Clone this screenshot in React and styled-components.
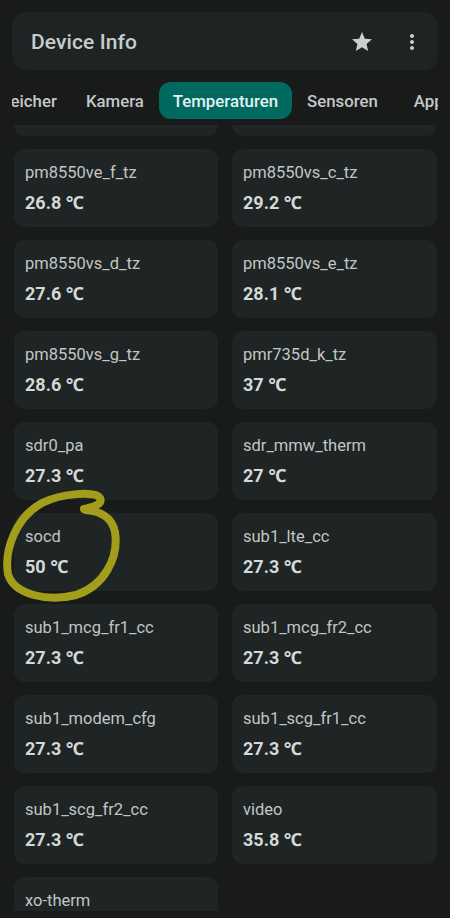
import React from "react";
import styled, { createGlobalStyle } from "styled-components";

const Global = createGlobalStyle`
  html, body { margin: 0; padding: 0; background: #191a1a; }
  body { font-family: Roboto, "Noto Sans", sans-serif; -webkit-font-smoothing: antialiased; }
  * { box-sizing: border-box; }
`;

const Page = styled.div`
  position: relative;
  width: 450px;
  height: 918px;
  overflow: hidden;
  background: #191a1a;
  padding-top: 12px;
`;

const TopBar = styled.header`
  margin: 0 12px;
  height: 58px;
  border-radius: 14px;
  background: #1f2323;
  display: flex;
  align-items: center;
  padding: 2px 6px 0 19px;
`;

const Title = styled.h1`
  flex: 1;
  margin: 0;
  font-size: 21px;
  font-weight: 500;
  color: #c6cdcb;
  letter-spacing: 0.1px;
`;

const IconButton = styled.button`
  width: 40px;
  height: 40px;
  border: 0;
  background: transparent;
  padding: 0;
  display: flex;
  align-items: center;
  justify-content: center;
  margin-left: ${(p) => p.$gap || 0}px;
`;

const TabStrip = styled.nav`
  margin: 12px 12px 0;
  height: 37px;
  overflow: hidden;
  white-space: nowrap;
`;

const TabRow = styled.div`
  display: flex;
  gap: 1px;
  margin-left: -35px;
  height: 100%;
`;

const Tab = styled.div`
  flex: none;
  height: 37px;
  padding: 0 14px;
  display: flex;
  align-items: center;
  border-radius: 12px;
  font-size: 16.8px;
  font-weight: 500;
  margin-left: ${(p) => p.$ml || 0}px;
  color: ${(p) => (p.$active ? "#e3f1ef" : "#c3c9c7")};
  background: ${(p) => (p.$active ? "#006a60" : "transparent")};
`;

const Scroller = styled.main`
  margin-top: 6px;
  height: 786px;
  overflow: hidden;
`;

const Grid = styled.div`
  display: grid;
  grid-template-columns: 204px 205px;
  column-gap: 14px;
  row-gap: 13px;
  padding: 0 13px 0 14px;
  margin-top: -67px;
`;

const Card = styled.div`
  height: 78px;
  border-radius: 11px;
  background: #1f2424;
  padding: 13px 11px 0 11px;
`;

const Label = styled.div`
  font-size: 16.5px;
  color: #c1c7c5;
  line-height: 21px;
`;

const Value = styled.div`
  margin-top: 9px;
  font-size: 18px;
  font-weight: 700;
  color: #d3d9d7;
  line-height: 21px;
`;

const Annotation = styled.svg`
  position: absolute;
  left: 0;
  top: 485px;
  width: 130px;
  height: 125px;
  pointer-events: none;
`;

const sensors = [
  ["pm8550ve_d_tz", "27.1 ℃"],
  ["pm8550vs_b_tz", "28.4 ℃"],
  ["pm8550ve_f_tz", "26.8 ℃"],
  ["pm8550vs_c_tz", "29.2 ℃"],
  ["pm8550vs_d_tz", "27.6 ℃"],
  ["pm8550vs_e_tz", "28.1 ℃"],
  ["pm8550vs_g_tz", "28.6 ℃"],
  ["pmr735d_k_tz", "37 ℃"],
  ["sdr0_pa", "27.3 ℃"],
  ["sdr_mmw_therm", "27 ℃"],
  ["socd", "50 ℃"],
  ["sub1_lte_cc", "27.3 ℃"],
  ["sub1_mcg_fr1_cc", "27.3 ℃"],
  ["sub1_mcg_fr2_cc", "27.3 ℃"],
  ["sub1_modem_cfg", "27.3 ℃"],
  ["sub1_scg_fr1_cc", "27.3 ℃"],
  ["sub1_scg_fr2_cc", "27.3 ℃"],
  ["video", "35.8 ℃"],
  ["xo-therm", "33.4 ℃"],
];

const tabs = [
  { t: "Speicher" },
  { t: "Kamera" },
  { t: "Temperaturen", active: true },
  { t: "Sensoren" },
  { t: "Apps", ml: 7 },
];

export default function App() {
  return (
    <>
      <Global />
      <Page>
        <TopBar>
          <Title>Device Info</Title>
          <IconButton aria-label="favorite">
            <svg width="24" height="24" viewBox="0 0 24 24">
              <path
                fill="#c9d1cf"
                d="M12 17.27L18.18 21l-1.64-7.03L22 9.24l-7.19-.61L12 2 9.19 8.63 2 9.24l5.46 4.73L5.82 21z"
              />
            </svg>
          </IconButton>
          <IconButton aria-label="more" $gap={10}>
            <svg width="24" height="24" viewBox="0 0 24 24">
              <path
                fill="#c9d1cf"
                d="M12 8c1.1 0 2-.9 2-2s-.9-2-2-2-2 .9-2 2 .9 2 2 2zm0 2c-1.1 0-2 .9-2 2s.9 2 2 2 2-.9 2-2-.9-2-2-2zm0 6c-1.1 0-2 .9-2 2s.9 2 2 2 2-.9 2-2-.9-2-2-2z"
              />
            </svg>
          </IconButton>
        </TopBar>
        <TabStrip>
          <TabRow>
            {tabs.map((x) => (
              <Tab key={x.t} $active={x.active} $ml={x.ml}>
                {x.t}
              </Tab>
            ))}
          </TabRow>
        </TabStrip>
        <Scroller>
          <Grid>
            {sensors.map(([n, v]) => (
              <Card key={n}>
                <Label>{n}</Label>
                <Value>{v}</Value>
              </Card>
            ))}
          </Grid>
        </Scroller>
        <Annotation viewBox="0 485 130 125">
          <path
            d="M 84 509 C 92 507, 103 505, 100 498 C 96 491, 62 493, 42 503 C 16 517, 4 550, 8 574 C 14 595, 48 602, 76 595 C 104 586, 119 558, 115 532 C 112 516, 98 511, 86 510"
            fill="none"
            stroke="#a29e1b"
            strokeWidth="8"
            strokeLinecap="round"
            strokeLinejoin="round"
          />
        </Annotation>
      </Page>
    </>
  );
}
